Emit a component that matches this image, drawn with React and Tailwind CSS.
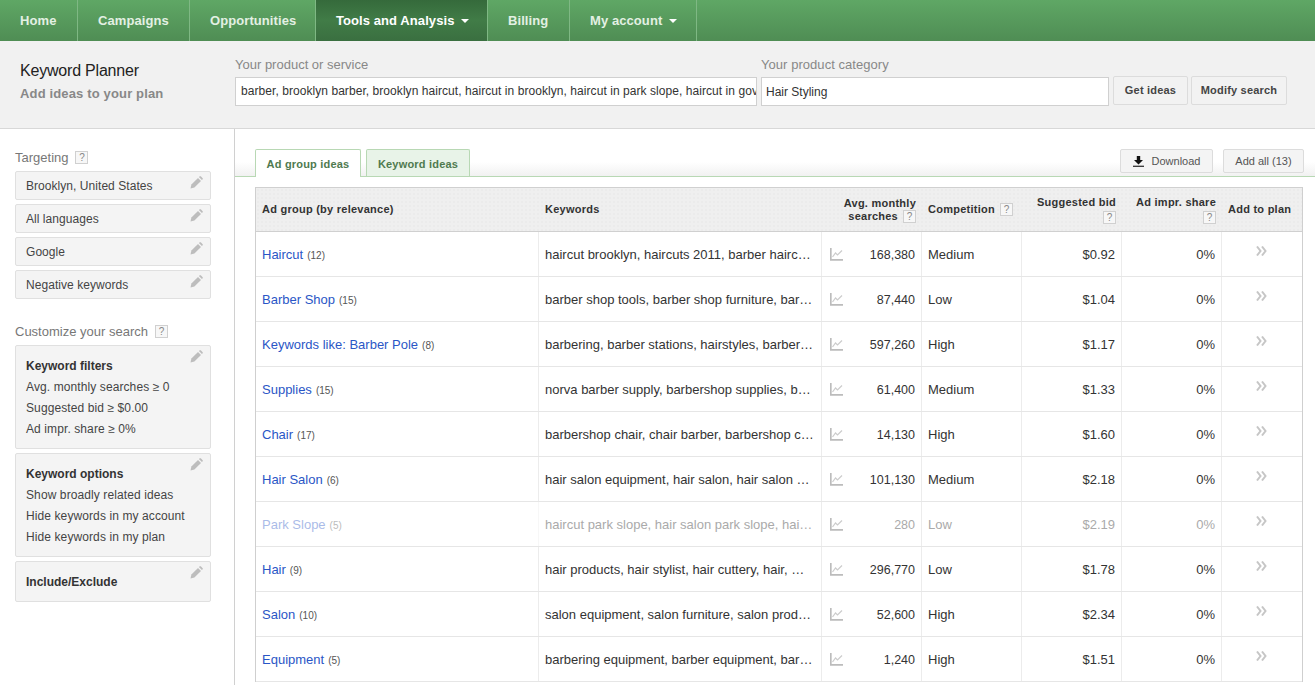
import React from "react";

const F = "font-['Liberation_Sans',Arial,sans-serif]";

function Pencil({ className = "" }) {
  return (
    <svg width="13" height="13" viewBox="0 0 13 13" className={className}>
      <path d="M0.5 12.5 L1.4 8.6 L8 2 L11 5 L4.4 11.6 Z" fill="#bdbdbd" />
      <path d="M8.9 1.1 L9.8 0.3 Q10.3 0 10.8 0.3 L12.7 2.2 Q13 2.7 12.7 3.2 L11.9 4.1 Z" fill="#bdbdbd" />
    </svg>
  );
}

function Help({ className = "" }) {
  return (
    <span className={`inline-flex w-[13px] h-[13px] items-center justify-center border border-[#d0d0d0] bg-[#f7f7f7] text-[10px] leading-none font-normal tracking-normal text-[#888] ${className}`}>?</span>
  );
}

function Chart() {
  return (
    <svg width="13" height="13" viewBox="0 0 13 13">
      <path d="M0.8 0 V11.8 H13" fill="none" stroke="#bcbcbc" strokeWidth="1.7" />
      <path d="M2.5 9 L5.5 5 L7.5 7 L12 2.5" fill="none" stroke="#cccccc" strokeWidth="1.2" />
    </svg>
  );
}

function Chevrons() {
  return (
    <svg width="11" height="10" viewBox="0 0 11 10">
      <path d="M1 0.5 L4.5 5 L1 9.5 M6 0.5 L9.5 5 L6 9.5" fill="none" stroke="#c6c6c6" strokeWidth="2" />
    </svg>
  );
}

function Download() {
  return (
    <svg width="11" height="11" viewBox="0 0 11 11">
      <path d="M3.8 0 H7.2 V4 H10 L5.5 8.4 L1 4 H3.8 Z" fill="#111" />
      <rect x="0" y="9.7" width="11" height="1.1" fill="#111" />
    </svg>
  );
}

const navItems = [
  { label: "Home", w: "w-[78px]" },
  { label: "Campaigns", w: "w-[112px]" },
  { label: "Opportunities", w: "w-[126px]" },
  { label: "Tools and Analysis", w: "w-[172px]", active: true, caret: true },
  { label: "Billing", w: "w-[82px]" },
  { label: "My account", w: "w-[127px]", caret: true },
];

const rows = [
  ["Haircut", "12", "haircut brooklyn, haircuts 2011, barber hairc…", "168,380", "Medium", "$0.92"],
  ["Barber Shop", "15", "barber shop tools, barber shop furniture, bar…", "87,440", "Low", "$1.04"],
  ["Keywords like: Barber Pole", "8", "barbering, barber stations, hairstyles, barber…", "597,260", "High", "$1.17"],
  ["Supplies", "15", "norva barber supply, barbershop supplies, b…", "61,400", "Medium", "$1.33"],
  ["Chair", "17", "barbershop chair, chair barber, barbershop c…", "14,130", "High", "$1.60"],
  ["Hair Salon", "6", "hair salon equipment, hair salon, hair salon …", "101,130", "Medium", "$2.18"],
  ["Park Slope", "5", "haircut park slope, hair salon park slope, hai…", "280", "Low", "$2.19", true],
  ["Hair", "9", "hair products, hair stylist, hair cuttery, hair, …", "296,770", "Low", "$1.78"],
  ["Salon", "10", "salon equipment, salon furniture, salon prod…", "52,600", "High", "$2.34"],
  ["Equipment", "5", "barbering equipment, barber equipment, bar…", "1,240", "High", "$1.51"],
];

const gridCols = "grid grid-cols-[283px_283px_100px_100px_100px_100px_80px]";

function SideBox({ title, lines, children, className = "" }) {
  return (
    <div className={`relative w-[196px] border border-[#e0e0e0] rounded-[2px] bg-[#f4f4f4] px-[10px] ${className}`}>
      <Pencil className="absolute right-[7px] top-[4px]" />
      {children}
      {title && <div className="font-bold text-[12px] leading-[21px] text-[#333]">{title}</div>}
      {lines && lines.map((l) => (
        <div key={l} className="text-[12px] leading-[21px] tracking-[0.1px] text-[#444]">{l}</div>
      ))}
    </div>
  );
}

function Row({ r }) {
  const [name, count, kw, avg, comp, bid, dim] = r;
  const tone = dim ? "text-[#aaa]" : "";
  return (
    <div className={`${gridCols} h-[45px] border-b border-[#e6e6e6] text-[13px] text-[#333]`}>
      <div className={`flex items-center pl-[6px] pt-[2px] border-r border-[#ececec] ${dim ? "opacity-40" : ""}`}>
        <span className="text-[#2a56c6] text-[13px]">{name}</span>
        <span className="ml-[4px] text-[10px] text-[#555] mt-[1px]">({count})</span>
      </div>
      <div className={`flex items-center pl-[6px] pt-[2px] border-r border-[#ececec] whitespace-nowrap overflow-hidden ${tone}`}>{kw}</div>
      <div className="flex items-center justify-between pl-[8px] pr-[6px] border-r border-[#ececec]">
        <Chart />
        <span className={`text-[12.5px] mt-[2px] ${tone}`}>{avg}</span>
      </div>
      <div className={`flex items-center pl-[6px] pt-[2px] border-r border-[#ececec] ${tone}`}>{comp}</div>
      <div className={`flex items-center justify-end pr-[6px] pt-[2px] border-r border-[#ececec] ${tone}`}>{bid}</div>
      <div className={`flex items-center justify-end pr-[6px] pt-[2px] border-r border-[#ececec] ${tone}`}>0%</div>
      <div className="flex justify-center pt-[14px] pr-[2px]"><Chevrons /></div>
    </div>
  );
}

export default function App() {
  return (
    <div className={`${F} w-[1315px] h-[685px] overflow-hidden bg-white flex flex-col`}>
      {/* Nav */}
      <nav className="h-[41px] shrink-0 flex bg-gradient-to-b from-[#5fa765] to-[#4f8d54]">
        {navItems.map((n) => (
          <div
            key={n.label}
            className={`${n.w} flex items-center pl-[20px] border-r border-[#7fb884] text-[13px] tracking-[0.08px] font-bold ${
              n.active
                ? "bg-gradient-to-b from-[#356a3b] via-[#417c47] to-[#3a6f40] text-white border-[#4a8550]"
                : "text-[#e3f0e3]"
            }`}
          >
            {n.label}
            {n.caret && (
              <span className="ml-[7px] w-0 h-0 border-l-[4px] border-r-[4px] border-t-[4px] border-l-transparent border-r-transparent border-t-white" />
            )}
          </div>
        ))}
      </nav>

      {/* Search header */}
      <header className="h-[88px] shrink-0 flex bg-[#f1f1f1] border-b border-[#d8d8d8]">
        <div className="w-[235px] pl-[20px] pt-[20px]">
          <div className="text-[16px] leading-[19px] tracking-[-0.2px] text-[#222]">Keyword Planner</div>
          <div className="mt-[6px] text-[13px] leading-[15px] tracking-[0.15px] font-bold text-[#888]">Add ideas to your plan</div>
        </div>
        <div className="w-[526px] pt-[16px]">
          <div className="text-[13px] leading-[15px] text-[#888]">Your product or service</div>
          <div className="mt-[5px] w-[522px] h-[29px] flex items-center bg-white border border-[#d0d0d0] pl-[5px] pb-[2px] text-[12px] tracking-[0.06px] text-[#333] overflow-hidden whitespace-nowrap">
            barber, brooklyn barber, brooklyn haircut, haircut in brooklyn, haircut in park slope, haircut in gov
          </div>
        </div>
        <div className="w-[352px] pt-[16px]">
          <div className="text-[13px] leading-[15px] tracking-[0.05px] text-[#888]">Your product category</div>
          <div className="mt-[5px] w-[348px] h-[29px] flex items-center bg-white border border-[#d0d0d0] pl-[4px] text-[12px] text-[#333]">
            Hair Styling
          </div>
        </div>
        <div className="pt-[35px] flex gap-[3px]">
          <div className="w-[75px] h-[29px] flex items-center justify-center bg-[#f2f2f2] border border-[#dcdcdc] rounded-[2px] text-[11px] tracking-[0.2px] font-bold text-[#444]">Get ideas</div>
          <div className="w-[96px] h-[29px] flex items-center justify-center bg-[#f2f2f2] border border-[#dcdcdc] rounded-[2px] text-[11px] tracking-[0.2px] font-bold text-[#444]">Modify search</div>
        </div>
      </header>

      <div className="flex flex-1 min-h-0">
        {/* Sidebar */}
        <aside className="w-[235px] shrink-0 border-r border-[#d0d0d0] pl-[15px] pt-[21px]">
          <div className="flex items-center h-[15px] text-[13px] text-[#777]">
            Targeting <Help className="ml-[7px]" />
          </div>
          <div className="mt-[6px] flex flex-col gap-[4px]">
            {["Brooklyn, United States", "All languages", "Google", "Negative keywords"].map((t) => (
              <SideBox key={t} className="h-[29px] flex items-center">
                <span className="text-[12px] tracking-[0.05px] text-[#444]">{t}</span>
              </SideBox>
            ))}
          </div>
          <div className="mt-[25px] flex items-center h-[15px] text-[13px] text-[#777]">
            Customize your search <Help className="ml-[7px]" />
          </div>
          <div className="mt-[6px] flex flex-col gap-[4px]">
            <SideBox className="h-[104px] pt-[10px]" title="Keyword filters" lines={["Avg. monthly searches ≥ 0", "Suggested bid ≥ $0.00", "Ad impr. share ≥ 0%"]} />
            <SideBox className="h-[104px] pt-[10px]" title="Keyword options" lines={["Show broadly related ideas", "Hide keywords in my account", "Hide keywords in my plan"]} />
            <SideBox className="h-[41px] pt-[10px]" title="Include/Exclude" />
          </div>
        </aside>

        {/* Main */}
        <main className="flex-1 min-w-0">
          <div className="h-[48px] pt-[20px] pl-[20px] pr-[11px] flex items-start justify-between border-b border-[#b8d8b4] bg-gradient-to-b from-white from-70% to-[#f1f1f1]">
            <div className="flex gap-[5px]">
              <div className="w-[106px] h-[28px] pt-[1px] flex items-center justify-center bg-white border border-[#b8d8b4] border-b-0 rounded-t-[2px] text-[11px] tracking-[0.2px] font-bold text-[#4f7a4f]">Ad group ideas</div>
              <div className="w-[104px] h-[27px] pt-[2px] flex items-center justify-center bg-[#e8f3e8] border border-[#b8d8b4] border-b-0 rounded-t-[2px] text-[11px] tracking-[0.2px] font-bold text-[#4f7a4f]">Keyword ideas</div>
            </div>
            <div className="flex gap-[10px]">
              <div className="w-[93px] h-[24px] flex items-center justify-center gap-[8px] bg-[#f4f4f4] border border-[#dcdcdc] rounded-[2px] text-[11px] text-[#555]"><Download />Download</div>
              <div className="w-[81px] h-[24px] flex items-center justify-center bg-[#f4f4f4] border border-[#dcdcdc] rounded-[2px] text-[11px] text-[#555]">Add all (13)</div>
            </div>
          </div>

          <div className="mt-[10px] ml-[20px] w-[1048px] border-x border-[#cfcfcf]">
            <div className={`${gridCols} h-[45px] bg-[#efefef] bg-[radial-gradient(#ebebeb_1px,transparent_1px)] bg-[length:4px_4px] border-y border-[#d0d0d0] text-[11px] tracking-[0.25px] font-bold text-[#333]`}>
              <div className="flex items-center pl-[6px]">Ad group (by relevance)</div>
              <div className="flex items-center pl-[6px]">Keywords</div>
              <div className="flex flex-col justify-center items-end pr-[6px] leading-[14px]">
                <span>Avg. monthly</span>
                <span className="flex items-center -mt-[1px]">searches <Help className="ml-[5px] mt-[1px]" /></span>
              </div>
              <div className="flex items-center pl-[6px]">Competition <Help className="ml-[5px]" /></div>
              <div className="flex flex-col justify-center items-end pr-[6px] leading-[14px]">
                <span>Suggested bid</span>
                <Help className="mt-[2px]" />
              </div>
              <div className="flex flex-col justify-center items-end pr-[6px] leading-[14px]">
                <span>Ad impr. share</span>
                <Help className="mt-[2px]" />
              </div>
              <div className="flex items-center pl-[6px]">Add to plan</div>
            </div>
            {rows.map((r) => <Row key={r[0]} r={r} />)}
          </div>
        </main>
      </div>
    </div>
  );
}
